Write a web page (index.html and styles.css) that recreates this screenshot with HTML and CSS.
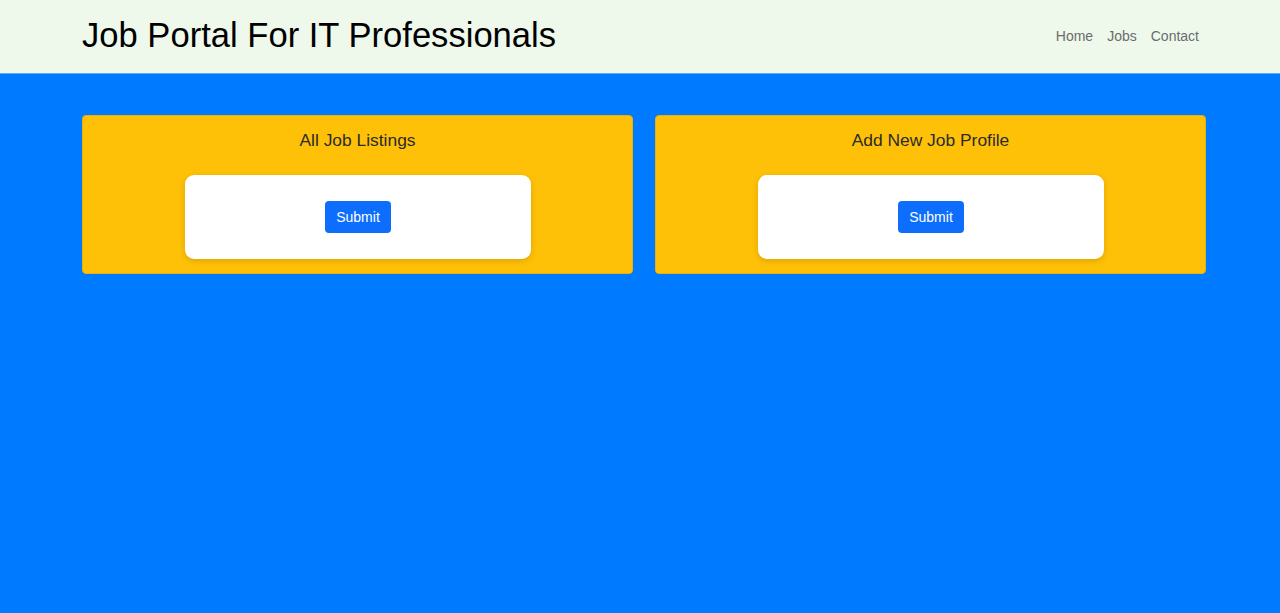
FILE: index.html
```html
<!DOCTYPE html>
<html lang="en">
<head>
<meta charset="utf-8">
<title>Job Portal For IT Professionals</title>
<link rel="stylesheet" href="styles.css">
</head>
<body>
<header class="topbar">
  <div class="container topbar-inner">
    <h1 class="brand">Job Portal For IT Professionals</h1>
    <nav class="nav">
      <a href="#">Home</a>
      <a href="#">Jobs</a>
      <a href="#">Contact</a>
    </nav>
  </div>
</header>
<main class="container cards">
  <section class="card">
    <h2 class="card-title">All Job Listings</h2>
    <div class="panel"><button class="btn">Submit</button></div>
  </section>
  <section class="card">
    <h2 class="card-title">Add New Job Profile</h2>
    <div class="panel"><button class="btn">Submit</button></div>
  </section>
</main>
</body>
</html>
```
FILE: styles.css
```css
* { box-sizing: border-box; }
html, body { margin: 0; padding: 0; }
body {
  background: #007bff;
  font-family: "Liberation Sans", Arial, sans-serif;
  min-height: 613px;
}
.container {
  width: 1132px;
  margin: 0 auto;
  padding-left: 8px;
}
.topbar {
  background: #eef9ec;
  height: 74px;
  border-bottom: 1px solid #5aa8ff;
}
.topbar-inner {
  display: flex;
  align-items: center;
  justify-content: space-between;
  height: 71px;
}
.brand {
  margin: 0;
  font-weight: 400;
  font-size: 34.6px;
  color: #000;
  line-height: 1;
}
.nav {
  display: flex;
  gap: 14px;
  padding-right: 7px;
}
.nav a {
  color: #6c6c6c;
  text-decoration: none;
  font-size: 14px;
}
.cards {
  display: grid;
  grid-template-columns: 551px 551px;
  gap: 22px;
  padding-top: 41px;
}
.card {
  background: #ffc107;
  border: 1px solid #e8b00a;
  border-radius: 4px;
  padding: 13px 14px 14px;
  display: flex;
  flex-direction: column;
  align-items: center;
}
.card-title {
  margin: 0 0 24px;
  font-weight: 400;
  font-size: 17.4px;
  line-height: 22px;
  color: #2b2b2b;
}
.panel {
  width: 346px;
  height: 84px;
  margin-left: 1px;
  background: #fff;
  border-radius: 9px;
  box-shadow: 0 2px 6px rgba(0,0,0,0.15);
  display: flex;
  align-items: center;
  justify-content: center;
}
.btn {
  background: #0d6efd;
  color: #fff;
  border: none;
  border-radius: 4px;
  font-family: "Liberation Sans", Arial, sans-serif;
  font-size: 14px;
  height: 32px;
  padding: 0 11px;
  cursor: pointer;
}
```
